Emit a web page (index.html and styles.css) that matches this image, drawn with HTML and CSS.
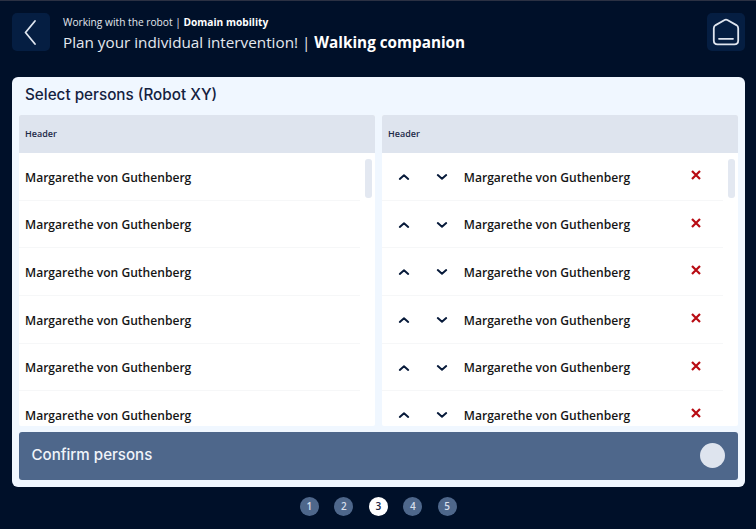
FILE: index.html
```html
<!DOCTYPE html>
<html lang="en">
<head>
<meta charset="utf-8">
<title>Select persons</title>
<link rel="stylesheet" href="styles.css">
</head>
<body>
<svg class="defs" width="0" height="0" aria-hidden="true">
  <symbol id="up" viewBox="0 0 12 8"><path d="M1.8 5.9 6 2.3l4.2 3.6" /></symbol>
  <symbol id="down" viewBox="0 0 12 8"><path d="M1.8 2.1 6 5.7l4.2-3.6" /></symbol>
  <symbol id="cross" viewBox="0 0 10 10"><path d="M1 1l8 8M9 1 1 9" /></symbol>
</svg>
<header class="top">
  <button class="square" aria-label="Back"><svg width="38" height="38" viewBox="0 0 38 38"><path d="M23 8 13.5 19.5 23 31" /></svg></button>
  <div class="titles">
    <div class="crumb">Working with the robot | <b>Domain mobility</b></div>
    <h1 class="title">Plan your individual intervention! | <b>Walking companion</b></h1>
  </div>
  <button class="square" aria-label="Home"><svg width="38" height="38" viewBox="0 0 38 38"><path d="M17.2 7.2 8.6 12.1Q6.8 13.2 6.8 15.2V27.6Q6.8 31.4 10.6 31.4H27.4Q31.2 31.4 31.2 27.6V15.2Q31.2 13.2 29.4 12.1L20.8 7.2Q19 6.2 17.2 7.2ZM12 25.8H26" /></svg></button>
</header>
<main class="panel">
  <h2 class="heading">Select persons (Robot XY)</h2>
  <div class="columns">
    <section class="column">
      <div class="column-head">Header</div>
      <div class="body">
        <ul class="list">
          <li class="row">Margarethe von Guthenberg</li>
          <li class="row">Margarethe von Guthenberg</li>
          <li class="row">Margarethe von Guthenberg</li>
          <li class="row">Margarethe von Guthenberg</li>
          <li class="row">Margarethe von Guthenberg</li>
          <li class="row">Margarethe von Guthenberg</li>
        </ul>
        <div class="thumb"></div>
      </div>
    </section>
    <section class="column">
      <div class="column-head">Header</div>
      <div class="body">
        <ul class="list chosen">
          <li class="row"><svg class="arrow"><use href="#up"/></svg><svg class="arrow"><use href="#down"/></svg><span class="name">Margarethe von Guthenberg</span><svg class="remove"><use href="#cross"/></svg></li>
          <li class="row"><svg class="arrow"><use href="#up"/></svg><svg class="arrow"><use href="#down"/></svg><span class="name">Margarethe von Guthenberg</span><svg class="remove"><use href="#cross"/></svg></li>
          <li class="row"><svg class="arrow"><use href="#up"/></svg><svg class="arrow"><use href="#down"/></svg><span class="name">Margarethe von Guthenberg</span><svg class="remove"><use href="#cross"/></svg></li>
          <li class="row"><svg class="arrow"><use href="#up"/></svg><svg class="arrow"><use href="#down"/></svg><span class="name">Margarethe von Guthenberg</span><svg class="remove"><use href="#cross"/></svg></li>
          <li class="row"><svg class="arrow"><use href="#up"/></svg><svg class="arrow"><use href="#down"/></svg><span class="name">Margarethe von Guthenberg</span><svg class="remove"><use href="#cross"/></svg></li>
          <li class="row"><svg class="arrow"><use href="#up"/></svg><svg class="arrow"><use href="#down"/></svg><span class="name">Margarethe von Guthenberg</span><svg class="remove"><use href="#cross"/></svg></li>
        </ul>
        <div class="thumb"></div>
      </div>
    </section>
  </div>
  <button class="confirm"><span>Confirm persons</span><i class="knob"></i></button>
</main>
<nav class="pages">
  <span class="page">1</span>
  <span class="page">2</span>
  <span class="page current">3</span>
  <span class="page">4</span>
  <span class="page">5</span>
</nav>
</body>
</html>
```
FILE: styles.css
```css
* { box-sizing: border-box; }
body {
  margin: 0;
  width: 756px;
  height: 529px;
  overflow: hidden;
  display: flex;
  flex-direction: column;
  padding: 0 11.5px 0 12px;
  border-top: 1px solid #2b3143;
  background: #001029;
  font-family: "Open Sans", sans-serif;
}
.defs { position: absolute; }
button { border: 0; padding: 0; font: inherit; }
svg { fill: none; stroke-linecap: round; stroke-linejoin: round; }

.top {
  display: flex;
  height: 75.7px;
  padding-top: 12px;
  align-items: flex-start;
  color: #e4e8ef;
}
.square {
  width: 38px;
  height: 38px;
  border-radius: 5px;
  background: #051e42;
}
.square svg { display: block; stroke: #dfe5ef; stroke-width: 1.8; }
.titles { flex: 1; padding-left: 13px; white-space: nowrap; }
.crumb { font-size: 10.2px; line-height: 18px; }
.title { margin: 0; font-size: 15.27px; line-height: 22px; font-weight: 400; }
.titles b { font-weight: 700; color: #fff; }

.panel {
  display: flex;
  flex-direction: column;
  height: 410px;
  padding: 0 6.5px 6.5px;
  border-radius: 6px;
  background: #f0f7ff;
}
.heading {
  margin: 0;
  height: 38.3px;
  padding-left: 6.5px;
  font: 500 15.25px/36px Inter, sans-serif;
  color: #14223f;
}
.columns {
  display: grid;
  grid-template-columns: 1fr 1fr;
  gap: 6.5px;
  height: 311.5px;
}
.column { display: flex; flex-direction: column; overflow: hidden; border-radius: 2px; background: #fff; }
.column-head {
  height: 38px;
  flex: none;
  padding-left: 6.5px;
  background: #dee4ee;
  color: #1c2a48;
  font-size: 9px;
  line-height: 38px;
  font-weight: 600;
}
.body { display: flex; justify-content: space-between; height: 273.5px; padding-right: 3.3px; overflow: hidden; }
.list { list-style: none; margin: 0; padding: 0; width: 341px; }
.row {
  display: flex;
  align-items: center;
  height: 47.65px;
  padding: 1.8px 0 0 6.5px;
  border-bottom: 1px solid #f6f7f8;
  color: #161616;
  font-size: 12.08px;
  font-weight: 600;
  white-space: nowrap;
}
.chosen .row { padding-left: 16px; }
.arrow { width: 12px; height: 8px; margin-right: 26px; stroke: #071a3a; stroke-width: 2; }
.chosen .name { margin-left: -9.7px; flex: 1; }
.remove { width: 10px; height: 10px; margin: -4px 22px 0 0; stroke: #b80b12; stroke-width: 2.2; stroke-linecap: butt; }
.thumb { width: 6.5px; height: 39px; margin-top: 6.5px; border-radius: 3px; background: #e3e8f1; }
.confirm {
  display: flex;
  align-items: center;
  justify-content: space-between;
  height: 47.5px;
  margin-top: 6px;
  padding: 0 13px 1px;
  border-radius: 3px;
  background: #4e678b;
  color: #f0f4fa;
  font: 500 15.1px Inter, sans-serif;
}
.confirm span { padding-bottom: 2px; }
.knob { width: 25.5px; height: 25.5px; border-radius: 50%; background: #dee4ee; }
.pages { display: flex; justify-content: center; gap: 15.3px; padding-top: 10.3px; }
.page {
  width: 19.2px;
  height: 19.2px;
  border-radius: 50%;
  background: #4e678b;
  color: #d7dfeb;
  font-size: 10px;
  line-height: 19.2px;
  font-weight: 600;
  text-align: center;
}
.current { background: #fff; color: #14223f; }
```
